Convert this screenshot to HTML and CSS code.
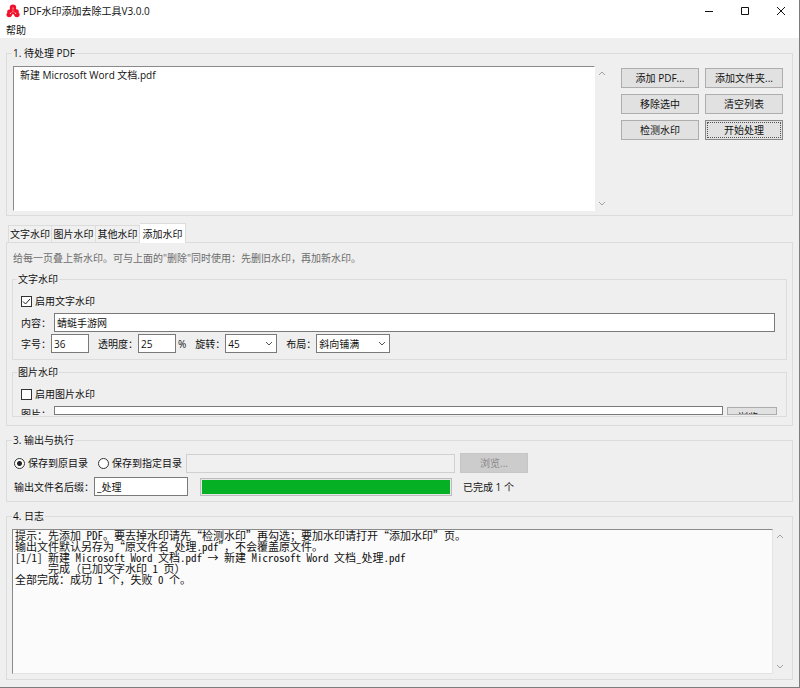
FILE: index.html
```html
<!DOCTYPE html>
<html lang="zh-CN">
<head>
    <meta charset="UTF-8">
    <meta name="viewport" content="width=device-width, initial-scale=1.0">
    <title>PDF水印添加去除工具V3.0.0</title>
    <link rel="stylesheet" href="styles.css">
</head>
<body>
    <header class="titlebar">
        <svg class="logo" viewBox="0 0 14 14" width="14" height="14">
            <g fill="#f0122d">
                <circle cx="7" cy="3.8" r="3.2"/>
                <circle cx="3.4" cy="7.6" r="2.2"/>
                <circle cx="10.6" cy="7.4" r="2.2"/>
                <circle cx="3.2" cy="10.6" r="2.7"/>
                <circle cx="10.9" cy="10.6" r="2.7"/>
                <path d="M4 5h6l2 5-3 1.5L7 10l-2 1.5L2 10z"/>
            </g>
            <path d="M7 4v3.4M7 7.4L4.6 9.2M7 7.4l2.4 1.8" stroke="#ff9aa8" stroke-width=".6" fill="none"/>
            <g fill="#ffd5da">
                <circle cx="7" cy="4" r=".6"/>
                <circle cx="4.4" cy="9.4" r=".6"/>
                <circle cx="9.6" cy="9.4" r=".6"/>
            </g>
        </svg>
        <h1>PDF水印添加去除工具V3.0.0</h1>
        <div class="window-buttons">
            <button type="button" aria-label="最小化"><svg viewBox="0 0 10 10" width="10" height="10"><path d="M1 5.5h8"/></svg></button>
            <button type="button" aria-label="最大化"><svg viewBox="0 0 10 10" width="10" height="10"><path d="M1.5 1.5h7v7h-7z"/></svg></button>
            <button type="button" aria-label="关闭"><svg viewBox="0 0 10 10" width="10" height="10"><path d="M1 1l8 8M9 1L1 9"/></svg></button>
        </div>
    </header>
    <nav class="menubar">
        <button type="button">帮助</button>
    </nav>

    <main>
        <fieldset class="group">
            <legend>1. 待处理 PDF</legend>
            <div class="files">
                <select class="file-list" size="2" aria-label="待处理 PDF">
                    <option>新建 Microsoft Word 文档.pdf</option>
                </select>
                <div class="scrollbar">
                    <button type="button" aria-label="向上"><svg viewBox="0 0 8 6" width="8" height="6"><path d="M1 5l3-3 3 3"/></svg></button>
                    <button type="button" aria-label="向下"><svg viewBox="0 0 8 6" width="8" height="6"><path d="M1 1l3 3 3-3"/></svg></button>
                </div>
                <div class="file-actions">
                    <button type="button" class="btn">添加 PDF...</button>
                    <button type="button" class="btn">添加文件夹...</button>
                    <button type="button" class="btn">移除选中</button>
                    <button type="button" class="btn">清空列表</button>
                    <button type="button" class="btn">检测水印</button>
                    <button type="button" class="btn btn-focus">开始处理</button>
                </div>
            </div>
        </fieldset>

        <section>
            <div class="tabs" role="tablist">
                <button type="button" role="tab">文字水印</button>
                <button type="button" role="tab">图片水印</button>
                <button type="button" role="tab">其他水印</button>
                <button type="button" role="tab" class="active" aria-selected="true">添加水印</button>
            </div>
            <div class="panel" role="tabpanel">
                <p class="hint">给每一页叠上新水印。可与上面的"删除"同时使用：先删旧水印，再加新水印。</p>

                <fieldset class="subgroup">
                    <legend>文字水印</legend>
                    <label class="check"><input type="checkbox" checked>启用文字水印</label>
                    <div class="row">
                        <label class="wide-label" for="content">内容：</label>
                        <input class="grow" type="text" id="content" value="蜻蜓手游网">
                    </div>
                    <div class="row options">
                        <label for="size">字号：</label>
                        <input class="short" type="text" id="size" value="36">
                        <label class="next" for="opacity">透明度：</label>
                        <input class="short" type="text" id="opacity" value="25">
                        <span class="unit">%</span>
                        <label class="next" for="angle">旋转：</label>
                        <select class="angle" id="angle"><option>45</option></select>
                        <label class="next" for="layout">布局：</label>
                        <select class="layout" id="layout"><option>斜向铺满</option></select>
                    </div>
                </fieldset>

                <fieldset class="subgroup image-group">
                    <legend>图片水印</legend>
                    <label class="check"><input type="checkbox">启用图片水印</label>
                    <div class="row cut">
                        <label class="wide-label" for="image">图片：</label>
                        <input class="grow" type="text" id="image">
                        <button type="button" class="btn">浏览...</button>
                    </div>
                </fieldset>
            </div>
        </section>

        <fieldset class="group output">
            <legend>3. 输出与执行</legend>
            <div class="row target">
                <label class="radio"><input type="radio" name="target" checked>保存到原目录</label>
                <label class="radio"><input type="radio" name="target">保存到指定目录</label>
                <input class="path" type="text" aria-label="指定目录" disabled>
                <button type="button" class="btn" disabled>浏览...</button>
            </div>
            <div class="row">
                <label class="suffix-label" for="suffix">输出文件名后缀：</label>
                <input class="suffix" type="text" id="suffix" value="_处理">
                <progress value="100" max="100"></progress>
                <span>已完成 1 个</span>
            </div>
        </fieldset>

        <fieldset class="group log-group">
            <legend>4. 日志</legend>
            <div class="log-wrap">
                <textarea class="log" rows="13" aria-label="日志" readonly>提示：先添加 PDF。要去掉水印请先“检测水印”再勾选；要加水印请打开“添加水印”页。
输出文件默认另存为“原文件名_处理.pdf”，不会覆盖原文件。
[1/1] 新建 Microsoft Word 文档.pdf → 新建 Microsoft Word 文档_处理.pdf
      完成（已加文字水印 1 页）
全部完成：成功 1 个，失败 0 个。</textarea>
                <div class="scrollbar">
                    <button type="button" aria-label="向上"><svg viewBox="0 0 8 6" width="8" height="6"><path d="M1 5l3-3 3 3"/></svg></button>
                    <button type="button" aria-label="向下"><svg viewBox="0 0 8 6" width="8" height="6"><path d="M1 1l3 3 3-3"/></svg></button>
                </div>
            </div>
        </fieldset>
    </main>
</body>
</html>
```
FILE: styles.css
```css
* {
    box-sizing: border-box;
}

body {
    display: flex;
    flex-direction: column;
    min-height: 100vh;
    margin: 0;
    border-right: 1px solid #7d7d7d;
    border-bottom: 1px solid #7d7d7d;
    background-color: #efefef;
    color: #111;
    font-family: "Open Sans", "Noto Sans CJK SC", sans-serif;
    font-size: 10px;
    line-height: 14px;
}

button, input, select {
    margin: 0;
    color: inherit;
    font: inherit;
}

/* title bar and menu */

.titlebar {
    display: flex;
    align-items: center;
    height: 22px;
    padding-left: 6px;
    background-color: #fff;
}

.titlebar h1 {
    flex: 1;
    margin: 0 0 0 3px;
    font-size: 10px;
    font-weight: normal;
}

.window-buttons {
    display: flex;
}

.window-buttons button {
    display: flex;
    align-items: center;
    justify-content: center;
    width: 36px;
    height: 22px;
    padding: 0;
    border: none;
    background: none;
}

.window-buttons path {
    fill: none;
    stroke: #111;
}

.menubar {
    height: 16px;
    padding-left: 6px;
    background-color: #fff;
}

.menubar button {
    display: block;
    height: 16px;
    padding: 0;
    border: none;
    background: none;
    line-height: 16px;
}

main {
    display: flex;
    flex: 1;
    flex-direction: column;
    gap: 7px;
    padding: 8px 6px 7px;
}

/* group boxes */

fieldset {
    min-width: 0;
    margin: 0;
    border: 1px solid #dcdcdc;
}

legend {
    height: 14px;
    margin-left: -1px;
    padding: 0 1px;
}

.group {
    padding: 6px 6px 4px;
}

.files {
    display: flex;
    height: 145px;
}

.file-list {
    flex: 1;
    min-width: 0;
    padding: 0;
    border: 1px solid #fff;
    border-top-color: #8a8a8a;
    border-left-color: #8a8a8a;
    border-radius: 0;
    background-color: #fff;
    overflow: hidden;
}

.file-list option {
    min-height: 14px;
    padding: 0 6px;
}

.scrollbar {
    display: flex;
    flex-direction: column;
    justify-content: space-between;
    width: 14px;
}

.scrollbar button {
    display: flex;
    align-items: center;
    justify-content: center;
    width: 14px;
    height: 14px;
    padding: 0;
    border: none;
    background: none;
}

.scrollbar path {
    fill: none;
    stroke: #a0a0a0;
}

.file-actions {
    display: grid;
    grid-template-columns: 78px 78px;
    grid-auto-rows: 20px;
    gap: 6px;
    margin: 2px 3px 0 12px;
}

.btn {
    padding: 0;
    border: 1px solid #adadad;
    background-color: #e1e1e1;
    line-height: 18px;
}

.btn:disabled {
    border-color: #c6c6c6;
    background-color: #ccc;
    color: #8a8a8a;
}

.btn-focus {
    outline: 1px dotted #555;
    outline-offset: -3px;
    border-color: #888;
}

/* tabs */

.tabs {
    display: flex;
    align-items: flex-end;
    height: 20px;
    margin: 0 0 -1px 2px;
}

.tabs button {
    width: 44px;
    height: 17px;
    margin-bottom: 1px;
    padding: 0;
    border: 1px solid #dcdcdc;
    border-bottom: none;
    border-left-width: 0;
    background-color: #f0f0f0;
    line-height: 16px;
}

.tabs button:first-child {
    border-left-width: 1px;
}

.tabs .active {
    position: relative;
    width: 46px;
    height: 20px;
    margin-bottom: 0;
    background-color: #fff;
    line-height: 18px;
}

.panel {
    padding: 8px 5px;
    border: 1px solid #dcdcdc;
}

.hint {
    margin: 0 1px 7px;
    color: #6d6d6d;
}

.subgroup {
    padding: 8px 8px 6px;
}

.subgroup legend {
    margin-left: -4px;
}

.image-group {
    margin-top: 5px;
    padding-bottom: 1px;
}

.check {
    display: flex;
    align-items: center;
    margin-bottom: 5px;
}

.row {
    display: flex;
    align-items: center;
}

.options {
    margin-top: 2px;
}

.wide-label {
    width: 33px;
}

.options label:first-child {
    width: 30px;
}

.options .next {
    margin-left: 9px;
}

.unit {
    margin-left: 2px;
}

.grow {
    flex: 1;
    min-width: 0;
    margin-right: 3px;
}

/* fields */

input[type="text"], select:not([size]) {
    height: 19px;
    padding: 0 2px;
    border: 1px solid #7a7a7a;
    border-radius: 0;
    background-color: #fff;
}

input[type="text"]:disabled {
    border-color: #d0d0d0;
    background-color: #f0f0f0;
}

.short {
    width: 38px;
}

select:not([size]) {
    appearance: none;
    background: #fff url("data:image/svg+xml,%3Csvg xmlns='http://www.w3.org/2000/svg' width='8' height='6'%3E%3Cpath d='M1 1l3 3 3-3' fill='none' stroke='%23555'/%3E%3C/svg%3E") no-repeat right 3px center;
}

.angle {
    width: 52px;
}

.layout {
    width: 74px;
}

input[type="checkbox"], input[type="radio"] {
    appearance: none;
    flex: none;
    width: 11px;
    height: 11px;
    margin-right: 3px;
    border: 1px solid #333;
    background-color: #fff;
}

input[type="checkbox"]:checked {
    background-image: url("data:image/svg+xml,%3Csvg xmlns='http://www.w3.org/2000/svg' width='9' height='9'%3E%3Cpath d='M1 4.5L3.5 7 8 2' fill='none' stroke='%23222'/%3E%3C/svg%3E");
}

input[type="radio"] {
    border-radius: 50%;
}

input[type="radio"]:checked {
    background-image: radial-gradient(circle, #222 2px, #fff 3px);
}

.cut {
    align-items: flex-start;
    height: 9px;
    overflow: hidden;
}

.cut label {
    padding-top: 1px;
}

.cut input[type="text"] {
    height: 9px;
    margin-right: 4px;
}

.cut .btn {
    width: 50px;
    height: 8px;
    margin: 1px 1px 0 0;
    overflow: hidden;
}

/* output */

.output {
    padding: 6px 7px 5px;
}

.output legend {
    margin-left: -2px;
}

.target {
    height: 20px;
    margin-bottom: 4px;
}

.radio {
    display: flex;
    align-items: center;
    width: 84px;
}

.radio + .radio {
    width: 88px;
}

.path {
    width: 269px;
}

.target .btn {
    width: 68px;
    height: 20px;
    margin-left: 5px;
}

.suffix-label {
    width: 80px;
}

.suffix {
    width: 94px;
}

progress {
    appearance: none;
    width: 252px;
    height: 18px;
    margin: 0 11px 0 12px;
    padding: 1px;
    border: 1px solid #bcbcbc;
    background-color: #e6e6e6;
}

progress::-webkit-progress-bar {
    background-color: #e6e6e6;
}

progress::-webkit-progress-value {
    background-color: #06b025;
}

/* log */

.log-group {
    flex: 1;
    padding: 6px 5px 4px;
}

.log-group legend {
    margin-left: 0;
}

.log-wrap {
    display: flex;
    height: 100%;
}

.log {
    flex: 1;
    min-width: 0;
    margin: 0;
    padding: 0 2px;
    border: 1px solid #e3e3e3;
    border-top-color: #8a8a8a;
    border-left-color: #8a8a8a;
    background-color: #fbfbfb;
    color: #111;
    font-family: "Noto Sans Mono CJK SC", "Noto Sans CJK SC", monospace;
    font-size: 11px;
    line-height: 11px;
    overflow: hidden;
    resize: none;
}
```
